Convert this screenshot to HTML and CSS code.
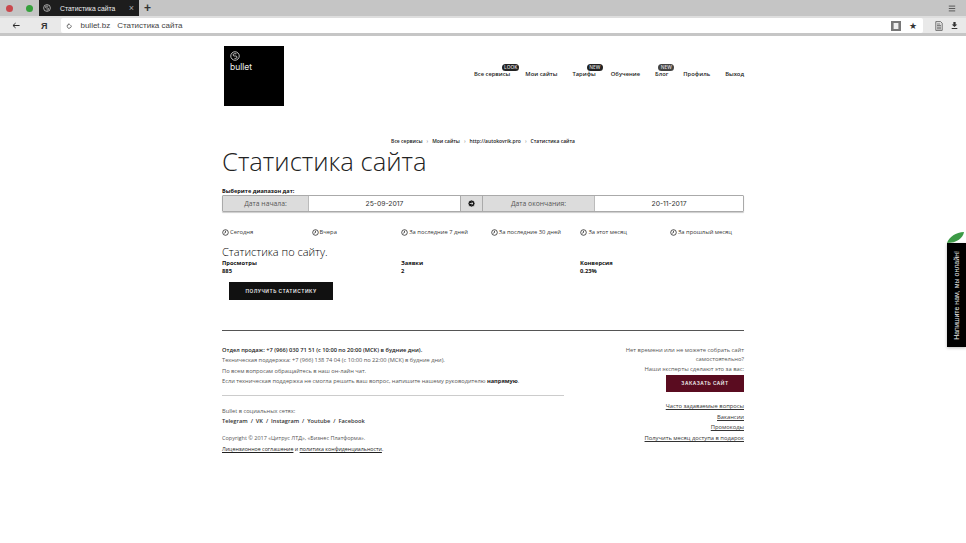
FILE: index.html
```html
<!DOCTYPE html>
<html lang="ru">
<head>
<meta charset="UTF-8" />
<title>Статистика сайта</title>
<link rel="stylesheet" href="styles.css">
</head>
<body>
<div class="tabbar">
  <span class="dot dot-red"></span>
  <span class="dot dot-green"></span>
  <div class="tab">
    <svg class="tab-logo" viewBox="0 0 20 20"><circle cx="10" cy="10" r="8.5"/><path d="M13 5.5H8.5a2.2 2.2 0 0 0 0 4.5h3a2.4 2.4 0 0 1 0 4.8H9"/></svg>
    <span class="tab-title">Статистика сайта</span>
    <span class="tab-close">×</span>
  </div>
  <span class="tab-new">+</span>
  <svg class="tab-menu" viewBox="0 0 10 8"><path d="M1 1h8M1 4h8M1 7h8"/></svg>
</div>
<div class="toolbar">
  <svg class="back" viewBox="0 0 10 8"><path d="M9.5 4H1.5M4.5 1 1.2 4l3.3 3"/></svg>
  <span class="ya">Я</span>
  <div class="address">
    <svg class="reload" viewBox="0 0 10 10"><path d="M7.8 3.4A3.3 3.3 0 1 1 5 2.2M4.6 0.6 6 2.2 4.6 3.6"/></svg>
    <span class="host">bullet.bz</span>
    <span class="page-name">Статистика сайта</span>
    <svg class="reader" viewBox="0 0 10 10"><rect width="10" height="10" fill="#777"/><rect x="2.6" y="2" width="4.8" height="6" fill="#eee"/></svg>
    <span class="star">★</span>
  </div>
  <svg class="doc" viewBox="0 0 10 12"><path d="M1 .5h6l2 2v9H1zM2.5 3.5h4M2.5 5.5h5M2.5 7.5h5M2.5 9.5h5"/></svg>
  <svg class="download" viewBox="0 0 10 10"><path d="M3.4 0h3.2v3.4H9L5 7 1 3.4h2.4zM1 8.6h8V10H1z"/></svg>
</div>

<div class="page">
  <header class="top">
    <div class="logo">
      <svg viewBox="0 0 20 20"><circle cx="10" cy="10" r="8.5"/><path d="M13 5.5H8.5a2.2 2.2 0 0 0 0 4.5h3a2.4 2.4 0 0 1 0 4.8H9"/></svg>
      <span>bullet</span>
    </div>
    <nav class="menu">
      <a>Все сервисы<i class="badge badge-look">LOOK</i></a>
      <a>Мои сайты</a>
      <a>Тарифы<i class="badge badge-tariff">NEW</i></a>
      <a>Обучение</a>
      <a>Блог<i class="badge badge-blog">NEW</i></a>
      <a>Профиль</a>
      <a>Выход</a>
    </nav>
  </header>

  <div class="crumbs">
    <a>Все сервисы</a><i>›</i><a>Мои сайты</a><i>›</i><a>http://autokovrik.pro</a><i>›</i><a>Статистика сайта</a>
  </div>

  <h1>Статистика сайта</h1>

  <div class="range-label">Выберите диапазон дат:</div>
  <div class="range">
    <div class="range-name start-name">Дата начала:</div>
    <div class="range-value start-value">25-09-2017</div>
    <div class="range-arrow">
      <svg viewBox="0 0 10 10"><circle cx="5" cy="5" r="5"/><path d="M2.4 5h4.6M5 3l2.2 2L5 7"/></svg>
    </div>
    <div class="range-name end-name">Дата окончания:</div>
    <div class="range-value end-value">20-11-2017</div>
  </div>

  <div class="presets">
    <a><svg viewBox="0 0 10 10"><circle cx="5" cy="5" r="4"/><path d="M5 2.6V5l-1.8 1"/></svg>Сегодня</a>
    <a><svg viewBox="0 0 10 10"><circle cx="5" cy="5" r="4"/><path d="M5 2.6V5l-1.8 1"/></svg>Вчера</a>
    <a><svg viewBox="0 0 10 10"><circle cx="5" cy="5" r="4"/><path d="M5 2.6V5l-1.8 1"/></svg>За последние 7 дней</a>
    <a><svg viewBox="0 0 10 10"><circle cx="5" cy="5" r="4"/><path d="M5 2.6V5l-1.8 1"/></svg>За последние 30 дней</a>
    <a><svg viewBox="0 0 10 10"><circle cx="5" cy="5" r="4"/><path d="M5 2.6V5l-1.8 1"/></svg>За этот месяц</a>
    <a><svg viewBox="0 0 10 10"><circle cx="5" cy="5" r="4"/><path d="M5 2.6V5l-1.8 1"/></svg>За прошлый месяц</a>
  </div>

  <h2>Статистика по сайту.</h2>
  <div class="stats">
    <div>Просмотры<br>885</div>
    <div>Заявки<br>2</div>
    <div>Конверсия<br>0.23%</div>
  </div>
  <button class="btn btn-stats">ПОЛУЧИТЬ СТАТИСТИКУ</button>

  <footer class="footer">
    <div class="foot-left">
      <p class="foot-sales">Отдел продаж: +7 (966) 030 71 51 (с 10:00 по 20:00 (МСК) в будние дни).</p>
      <p>Техническая поддержка: +7 (966) 138 74 04 (с 10:00 по 22:00 (МСК) в будние дни).</p>
      <p>По всем вопросам обращайтесь в наш он-лайн чат.</p>
      <p>Если техническая поддержка не смогла решить ваш вопрос, напишите нашему руководителю <b>напрямую</b>.</p>
      <div class="foot-rule"></div>
      <p>Bullet в социальных сетях:</p>
      <p class="social">Telegram &nbsp;/&nbsp; VK &nbsp;/&nbsp; Instagram &nbsp;/&nbsp; Youtube &nbsp;/&nbsp; Facebook</p>
      <p class="copyright">Copyright © 2017 «Цитрус ЛТД», «Бизнес Платформа».</p>
      <p class="legal"><u>Лицензионное соглашение</u> и <u>политика конфиденциальности</u>.</p>
    </div>
    <div class="foot-right">
      <p class="pitch">Нет времени или не можете собрать сайт самостоятельно?</p>
      <p class="pitch-last">Наши эксперты сделают это за вас:</p>
      <button class="btn btn-order">ЗАКАЗАТЬ САЙТ</button>
      <ul class="foot-links">
        <li><u>Часто задаваемые вопросы</u></li>
        <li><u>Вакансии</u></li>
        <li><u>Промокоды</u></li>
        <li><u>Получить месяц доступа в подарок</u></li>
      </ul>
    </div>
  </footer>
</div>

<div class="chat">
  <svg class="chat-leaf" viewBox="0 0 19 11"><path d="M0 11C2 5 9 0 17 0c-1 6-7 11-17 11z"/></svg>
  <div class="chat-body"><span>Напишите нам, мы онлайн!</span></div>
</div>
</body>
</html>
```

FILE: styles.css
```css
* {
  box-sizing: border-box;
}
html, body {
  margin: 0;
  height: 543px;
  overflow: hidden;
}
body {
  font-family: "Open Sans", "Liberation Sans", sans-serif;
  font-size: 5.8px;
  color: #222;
  background: #fff;
}
p {
  margin: 0;
}

/* browser chrome */
.tabbar {
  display: flex;
  align-items: center;
  height: 16px;
  background: #c5c5c5;
}
.dot {
  width: 7px;
  height: 7px;
  border-radius: 50%;
}
.dot-red {
  background: #c9484d;
  margin-left: 6px;
}
.dot-green {
  background: #35a03c;
  margin-left: 13px;
}
.tab {
  display: flex;
  align-items: center;
  width: 100px;
  height: 16px;
  margin-left: 6px;
  background: #1d1d1d;
  color: #eee;
  font-family: "Liberation Sans", sans-serif;
  font-size: 6.8px;
}
.tab-logo {
  width: 8px;
  height: 8px;
  margin-left: 4px;
  fill: none;
  stroke: #eee;
  stroke-width: 1.6;
}
.tab-title {
  margin-left: 9px;
}
.tab-close {
  margin-left: auto;
  margin-right: 5px;
  color: #aaa;
  font-size: 9px;
}
.tab-new {
  margin-left: 5px;
  font-family: "Liberation Sans", sans-serif;
  font-size: 12px;
  font-weight: 700;
  color: #333;
}
.tab-menu {
  width: 8px;
  height: 7px;
  margin-left: auto;
  margin-right: 10px;
  fill: none;
  stroke: #555;
  stroke-width: 1.2;
}
.toolbar {
  display: flex;
  align-items: center;
  height: 20px;
  background: #e9e9e9;
  border-top: 2px solid #dedede;
  border-bottom: 3px solid #c6c6c6;
}
.back {
  width: 8px;
  height: 7px;
  margin-left: 12px;
  fill: none;
  stroke: #222;
  stroke-width: 1.2;
}
.ya {
  margin-left: 21px;
  font-family: "Liberation Sans", sans-serif;
  font-size: 9px;
  font-weight: 700;
  color: #333;
}
.address {
  display: flex;
  align-items: center;
  width: 862px;
  height: 15px;
  margin-left: 14px;
  background: #fff;
  border-radius: 2px;
  font-family: "Liberation Sans", sans-serif;
  font-size: 8px;
  color: #444;
}
.reload {
  width: 6px;
  height: 6px;
  margin-left: 5px;
  fill: none;
  stroke: #333;
  stroke-width: 1.1;
}
.host {
  margin-left: 8px;
}
.page-name {
  margin-left: 7px;
}
.reader {
  width: 10px;
  height: 10px;
  margin-left: auto;
}
.star {
  margin-left: 8px;
  margin-right: 6px;
  font-size: 9px;
  color: #333;
}
.doc {
  width: 8px;
  height: 10px;
  margin-left: 12px;
  fill: none;
  stroke: #555;
  stroke-width: 1;
}
.download {
  width: 7px;
  height: 7px;
  margin-left: 8px;
  fill: #333;
}

/* page */
.page {
  width: 522px;
  margin-left: 222px;
}
.top {
  display: flex;
  justify-content: space-between;
  padding: 10px 0 0 2px;
}
.logo {
  display: flex;
  flex-direction: column;
  width: 60px;
  height: 60px;
  padding: 5px 6px;
  background: #000;
  color: #eee;
  font-family: "Inter", sans-serif;
  font-size: 8.5px;
}
.logo svg {
  width: 10px;
  height: 10px;
  margin-bottom: 1px;
  fill: none;
  stroke: #eee;
  stroke-width: 1.6;
}
.menu {
  display: flex;
  gap: 15px;
  padding-top: 24px;
  font-size: 5.8px;
  font-weight: 600;
}
.menu a {
  position: relative;
  color: #222;
}
.badge {
  position: absolute;
  top: -6px;
  right: -9px;
  min-width: 16px;
  height: 7px;
  padding: 0 2px;
  border-radius: 4px;
  background: #222;
  color: #ddd;
  font-style: normal;
  font-size: 4.8px;
  line-height: 7px;
  text-align: center;
}
.badge-tariff {
  right: -7px;
}
.badge-blog {
  right: -6px;
  background: #444;
}
.crumbs {
  display: flex;
  justify-content: center;
  gap: 4px;
  margin-top: 32px;
  font-size: 5px;
  line-height: 7px;
  font-weight: 600;
}
.crumbs i {
  font-style: normal;
  color: #999;
}
h1 {
  margin: 2px 0 0;
  font-size: 25.6px;
  line-height: 30px;
  font-weight: 300;
  color: #222;
}
.range-label {
  margin-top: 10px;
  font-size: 5.6px;
  font-weight: 700;
  line-height: 8px;
  color: #111;
}
.range {
  display: flex;
  height: 17px;
  border: 1px solid #aaa;
  border-radius: 1px;
  line-height: 15px;
  text-align: center;
  font-size: 6.8px;
  box-shadow: 0 1px 1px #ccc;
}
.range-name {
  background: #dcdcdc;
  color: #555;
  border-right: 1px solid #bbb;
}
.start-name {
  width: 86px;
}
.start-value {
  width: 151px;
}
.end-name {
  width: 112px;
}
.end-value {
  flex: 1;
}
.range-value {
  font-family: "Inter", sans-serif;
  color: #333;
}
.range-arrow {
  display: flex;
  align-items: center;
  justify-content: center;
  width: 23px;
  background: #dcdcdc;
  border-left: 1px solid #aaa;
  border-right: 1px solid #aaa;
}
.range-arrow svg {
  width: 7px;
  height: 7px;
  fill: #111;
  stroke: #fff;
}
.presets {
  display: grid;
  grid-template-columns: repeat(6, 89.6px);
  margin-top: 16px;
  line-height: 9px;
  color: #333;
}
.presets a {
  display: flex;
  align-items: center;
  gap: 1px;
  white-space: nowrap;
}
.presets svg {
  width: 7px;
  height: 7px;
  fill: none;
  stroke: #222;
  stroke-width: 1.1;
}
h2 {
  margin: 8px 0 0;
  font-size: 11px;
  line-height: 14px;
  font-weight: 300;
  color: #000;
}
.stats {
  display: grid;
  grid-template-columns: repeat(3, 179px);
  font-weight: 700;
  line-height: 8px;
  color: #111;
}
.btn {
  display: block;
  border: 0;
  color: #eee;
  font-family: "Inter", sans-serif;
  font-size: 4.8px;
  font-weight: 600;
  letter-spacing: 0.5px;
}
.btn-stats {
  width: 104px;
  height: 18px;
  margin: 7px 0 0 7px;
  background: #111;
}

/* footer */
.footer {
  display: flex;
  justify-content: space-between;
  margin-top: 30px;
  padding-top: 14px;
  border-top: 1px solid #555;
  color: #555;
  line-height: 10.4px;
}
.foot-left {
  width: 342px;
  font-size: 5.7px;
}
.foot-sales {
  color: #222;
  font-weight: 600;
}
.foot-left b {
  color: #222;
}
.foot-rule {
  height: 1px;
  margin: 8px 0 10px;
  background: #ccc;
}
.social {
  color: #333;
  font-weight: 600;
}
.copyright {
  margin-top: 7px;
  font-size: 5.5px;
}
.legal {
  color: #222;
  font-size: 5.3px;
}
.foot-right {
  display: flex;
  flex-direction: column;
  align-items: flex-end;
  width: 130px;
  text-align: right;
  line-height: 8.5px;
}
.pitch {
  margin-top: 1px;
}
.pitch-last {
  margin: 1.5px 0 1.5px;
}
.btn-order {
  width: 78px;
  height: 17px;
  background: #5a0c20;
}
.foot-links {
  margin: 9.7px 0 0;
  padding: 0;
  list-style: none;
  line-height: 10.6px;
  color: #333;
}

/* chat widget */
.chat {
  position: absolute;
  top: 232px;
  right: 0;
  display: flex;
  flex-direction: column;
  width: 19px;
}
.chat-leaf {
  display: block;
  width: 19px;
  height: 11px;
  fill: #3c9a46;
}
.chat-body {
  display: flex;
  align-items: center;
  justify-content: center;
  height: 104px;
  background: #000;
  box-shadow: 0 1px 3px #bbb;
}
.chat-body span {
  writing-mode: vertical-rl;
  transform: rotate(180deg);
  color: #eee;
  font-family: "Liberation Sans", sans-serif;
  font-size: 7px;
  white-space: nowrap;
}
```
